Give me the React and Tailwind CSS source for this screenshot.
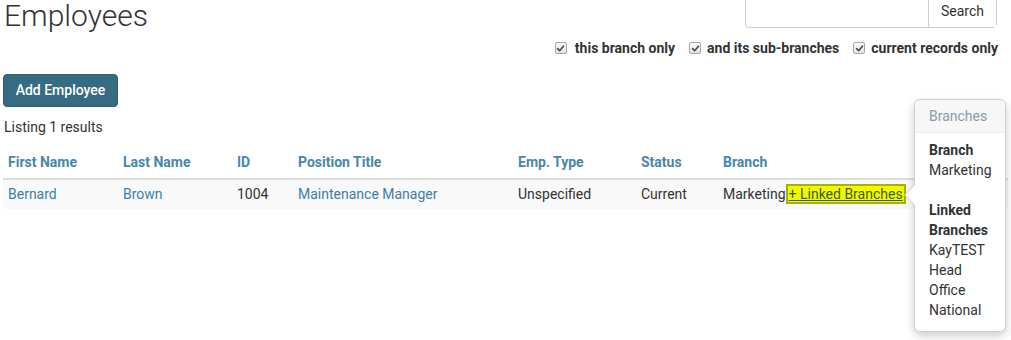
import React from "react";

function Check() {
  return (
    <span className="inline-flex w-[12px] h-[12px] items-center justify-center rounded-[2px] border border-[#a6a6a6] bg-gradient-to-b from-[#fbfbfb] to-[#e4e4e4]">
      <svg width="9" height="9" viewBox="0 0 10 10">
        <path d="M1.8 5.2 L4 7.4 L8.3 2.4" fill="none" stroke="#4a4a4a" strokeWidth="1.8" strokeLinecap="round" strokeLinejoin="round" />
      </svg>
    </span>
  );
}

export default function App() {
  const cols = [
    { label: "First Name", w: "w-[115px]" },
    { label: "Last Name", w: "w-[114px]" },
    { label: "ID", w: "w-[61px]" },
    { label: "Position Title", w: "w-[220px]" },
    { label: "Emp. Type", w: "w-[123px]" },
    { label: "Status", w: "w-[82px]" },
    { label: "Branch", w: "" },
  ];
  return (
    <div className="relative w-[1011px] h-[340px] overflow-hidden bg-white font-['Roboto',sans-serif] text-[14px] text-[#333]">
      <div className="flex items-start justify-between">
        <h1 className="ml-[4px] pt-[1px] text-[30px] leading-[30px] font-light text-[#333]">Employees</h1>
        <div className="mt-[-6px] mr-[14px] flex h-[34px] rounded-[4px] border border-[#cccccc]">
          <div className="w-[182px]" />
          <button className="w-[68px] border-l border-[#cccccc] bg-white pt-[1px] text-[14px] text-[#333]">Search</button>
        </div>
      </div>

      <div className="mt-[7px] flex justify-end items-center pr-[13px] leading-[20px] font-bold text-[#333]">
        <span className="flex items-center gap-[8px]"><Check />this branch only</span>
        <span className="ml-[14px] flex items-center gap-[6px]"><Check />and its sub-branches</span>
        <span className="ml-[14px] flex items-center gap-[6px]"><Check />current records only</span>
      </div>

      <div className="mt-[16px] ml-[3px]">
        <button className="h-[33px] w-[115px] rounded-[4px] border border-[#2f5f73] bg-[#376b82] text-[14px] font-medium text-white">Add Employee</button>
      </div>

      <div className="mt-[10px] ml-[4px] leading-[20px]">Listing 1 results</div>

      <table className="mt-[11px] ml-[3px] w-[1005px] border-collapse text-left">
        <thead>
          <tr className="border-b-2 border-[#dddddd]">
            {cols.map((c) => (
              <th key={c.label} className={`${c.w} pl-[5px] pt-[4px] pb-[6px] leading-[20px] font-bold text-[#4787a9]`}>{c.label}</th>
            ))}
          </tr>
        </thead>
        <tbody>
          <tr className="bg-[#f9f9f9]">
            <td className="pl-[5px] pt-[4px] pb-[5px] leading-[20px] text-[#3f7fa5]">Bernard</td>
            <td className="pl-[5px] pt-[4px] pb-[5px] leading-[20px] text-[#3f7fa5]">Brown</td>
            <td className="pl-[5px] pt-[4px] pb-[5px] leading-[20px]">1004</td>
            <td className="pl-[5px] pt-[4px] pb-[5px] leading-[20px] text-[#3f7fa5]">Maintenance Manager</td>
            <td className="pl-[5px] pt-[4px] pb-[5px] leading-[20px]">Unspecified</td>
            <td className="pl-[5px] pt-[4px] pb-[5px] leading-[20px]">Current</td>
            <td className="pl-[5px] pt-[4px] pb-[5px] leading-[20px] whitespace-nowrap">
              Marketing<span className="inline-block border-2 border-[#a8b000] bg-[#f2f800] px-[1px] leading-[16px] text-[#3d5f1f] underline">+ Linked Branches</span>
            </td>
          </tr>
        </tbody>
      </table>

      <div className="absolute left-[914px] top-[99px] w-[92px] rounded-[6px] border border-[#cfcfcf] bg-white shadow-[0_4px_10px_rgba(0,0,0,0.2)]">
        <div className="absolute left-[-11px] top-[84px] h-0 w-0 border-y-[11px] border-r-[11px] border-y-transparent border-r-[#c8c8c8]" />
        <div className="absolute left-[-10px] top-[85px] h-0 w-0 border-y-[10px] border-r-[10px] border-y-transparent border-r-white" />
        <div className="rounded-t-[6px] border-b border-[#ebebeb] bg-[#f7f7f7] px-[14px] pt-[6px] pb-[6px] leading-[20px] text-[#8a9aa6]">Branches</div>
        <div className="px-[14px] pt-[7px] pb-[11px] leading-[20px] text-[#333]">
          <div className="font-bold">Branch</div>
          <div>Marketing</div>
          <div className="h-[20px]" />
          <div className="font-bold">Linked Branches</div>
          <div>KayTEST</div>
          <div>Head Office</div>
          <div>National</div>
        </div>
      </div>
    </div>
  );
}
